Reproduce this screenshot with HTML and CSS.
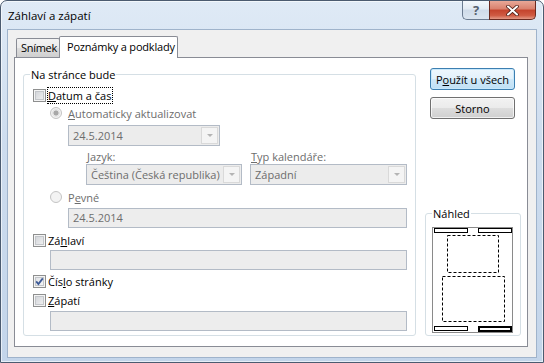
FILE: index.html
```html
<!DOCTYPE html>
<html lang="cs">
<head>
    <meta charset="UTF-8">
    <title>Záhlaví a zápatí</title>
    <link rel="stylesheet" href="styles.css">
</head>
<body>
    <div class="window">
        <div class="titlebar">
            <span class="title">Záhlaví a zápatí</span>
            <div class="caption-buttons">
                <span class="cap-btn help">?</span>
                <span class="cap-btn close">
                    <svg width="13" height="11" viewBox="0 0 13 11">
                        <path d="M2 1.5 L11 9.5 M11 1.5 L2 9.5" stroke="#4a1d15" stroke-width="3.6" stroke-linecap="round"/>
                        <path d="M2 1.5 L11 9.5 M11 1.5 L2 9.5" stroke="#fff" stroke-width="2" stroke-linecap="round"/>
                    </svg>
                </span>
            </div>
        </div>

        <div class="client">
            <div class="tabs">
                <span class="tab">Snímek</span>
                <span class="tab active">Poznámky a podklady</span>
            </div>

            <div class="panel">
                <div class="group main-group">
                    <span class="legend">Na stránce bude</span>

                    <div class="row row-datum">
                        <span class="check"></span>
                        <span class="focus"><u>D</u>atum a čas</span>
                    </div>
                    <div class="row indent-1 disabled">
                        <span class="radio selected"></span>
                        <span><u>A</u>utomaticky aktualizovat</span>
                    </div>
                    <div class="combo date-combo">
                        <span class="combo-text">24.5.2014</span>
                        <span class="combo-btn"><span class="arrow"></span></span>
                    </div>
                    <div class="lang-grid disabled">
                        <span class="field-label"><u>J</u>azyk:</span>
                        <span class="field-label"><u>T</u>yp kalendáře:</span>
                        <div class="combo">
                            <span class="combo-text">Čeština (Česká republika)</span>
                            <span class="combo-btn"><span class="arrow"></span></span>
                        </div>
                        <div class="combo">
                            <span class="combo-text">Západní</span>
                            <span class="combo-btn"><span class="arrow"></span></span>
                        </div>
                    </div>
                    <div class="row indent-1 row-pevne disabled">
                        <span class="radio"></span>
                        <span>P<u>e</u>vné</span>
                    </div>
                    <div class="textbox date-box">24.5.2014</div>

                    <div class="row row-zahlavi">
                        <span class="check"></span>
                        <span>Zá<u>h</u>laví</span>
                    </div>
                    <div class="textbox wide-box box-zahlavi"></div>

                    <div class="row row-cislo">
                        <span class="check checked">
                            <svg width="11" height="11" viewBox="0 0 11 11">
                                <path d="M2.2 5.4 L4.4 8 L8.8 2.4" fill="none" stroke="#3d5a97" stroke-width="1.8"/>
                            </svg>
                        </span>
                        <span>Čís<u>l</u>o stránky</span>
                    </div>
                    <div class="row row-zapati">
                        <span class="check"></span>
                        <span><u>Z</u>ápatí</span>
                    </div>
                    <div class="textbox wide-box box-zapati"></div>
                </div>

                <div class="side">
                    <button class="btn default">P<u>o</u>užít u všech</button>
                    <button class="btn storno">Storno</button>

                    <div class="group preview-group">
                        <span class="legend">Náhled</span>
                        <svg class="preview" width="81" height="106" viewBox="0 0 81 106">
                            <rect x="0.5" y="0.5" width="80" height="105" fill="#fff" stroke="#8a8a8a"/>
                            <rect x="2.5" y="1.5" width="33" height="4" fill="#fff" stroke="#000"/>
                            <rect x="46.5" y="1.5" width="33" height="4" fill="#fff" stroke="#000"/>
                            <rect x="15.5" y="8.5" width="51" height="37" fill="none" stroke="#000" stroke-dasharray="3 2"/>
                            <rect x="10.5" y="49.5" width="62" height="45" fill="none" stroke="#000" stroke-dasharray="3 2"/>
                            <rect x="2.5" y="99.5" width="33" height="4" fill="#fff" stroke="#000"/>
                            <rect x="47" y="100" width="32" height="4" fill="#fff" stroke="#000" stroke-width="2"/>
                        </svg>
                    </div>
                </div>
            </div>
        </div>
    </div>
</body>
</html>
```

FILE: styles.css
```css
body {
    margin: 0;
    font-family: "Open Sans", "Noto Sans", sans-serif;
    font-size: 11px;
    color: #000;
    background: #fff;
}

.window {
    width: 544px;
    height: 363px;
    box-sizing: border-box;
    border: 1px solid #4b5b70;
    border-radius: 7px 7px 0 0;
    background: linear-gradient(#dfeaf6, #cddcee 40%, #c3d5ea);
    box-shadow: inset 0 0 0 1px rgba(255, 255, 255, 0.6);
    padding: 0 6px 4px 6px;
    display: flex;
    flex-direction: column;
}

/* title bar */
.titlebar {
    height: 28px;
    display: flex;
    justify-content: space-between;
    align-items: center;
}

.title {
    margin-left: 1px;
    font-size: 11.5px;
    color: #000;
}

.caption-buttons {
    align-self: flex-start;
    display: flex;
    margin-right: 1px;
}

.cap-btn {
    height: 19px;
    display: flex;
    align-items: center;
    justify-content: center;
    box-sizing: border-box;
    border: 1px solid #6b7b90;
    border-top: none;
}

.help {
    width: 27px;
    border-right: none;
    border-radius: 0 0 0 5px;
    background: linear-gradient(#f4f8fc, #e2eaf3 45%, #cfdbe9 50%, #dbe5f0);
    font-size: 13px;
    font-weight: bold;
    color: #56616f;
}

.close {
    width: 47px;
    border-color: #6a2a20;
    border-radius: 0 0 5px 0;
    background: linear-gradient(#e8a898, #d9806c 45%, #c4432c 50%, #cf5a42 80%, #e49a86);
}

/* client area */
.client {
    flex: 1;
    border: 1px solid #9fb3cb;
    background: #f0f0f0;
    padding: 6px 8px 10px 6px;
    display: flex;
    flex-direction: column;
}

.tabs {
    height: 21px;
    display: flex;
    align-items: flex-end;
    padding-left: 2px;
}

.tab {
    width: 44px;
    height: 19px;
    box-sizing: border-box;
    border: 1px solid #898c95;
    border-bottom: none;
    background: linear-gradient(#f3f3f3, #ebebeb 50%, #dddddd 51%, #cfcfcf);
    padding-left: 4px;
    letter-spacing: -0.3px;
    line-height: 17px;
    white-space: nowrap;
    border-radius: 2px 2px 0 0;
}

.tab.active {
    position: relative;
    z-index: 1;
    width: 119px;
    height: 22px;
    margin-left: -1px;
    margin-bottom: -1px;
    background: #fff;
    padding-left: 7px;
    letter-spacing: -0.2px;
    line-height: 19px;
}

.panel {
    flex: 1;
    border: 1px solid #898c95;
    background: #fff;
    padding: 10px 6px 10px 8px;
    display: flex;
    gap: 9px;
}

/* group boxes */
.group {
    box-sizing: border-box;
    border: 1px solid #d5dfe5;
    border-radius: 3px;
}

.legend {
    display: block;
    width: fit-content;
    height: 15px;
    line-height: 15px;
    margin: -8px 0 0 6px;
    padding: 0 1px;
    background: #fff;
}

.main-group {
    width: 393px;
    height: 262px;
    margin-top: 6px;
    padding: 0 8px 0 9px;
}

.main-group .legend {
    margin-left: -3px;
}

.row {
    display: flex;
    align-items: center;
    height: 18px;
}

.row-datum { margin-top: 4px; }
.row-pevne { margin-top: 3px; }
.row-zahlavi { margin-top: 3px; }
.row-cislo { margin-top: 2px; }
.row-zapati { margin-top: 1px; }

.indent-1 {
    margin-left: 17px;
}

.disabled {
    color: #6d6d6d;
}

.check {
    width: 13px;
    height: 13px;
    box-sizing: border-box;
    border: 1px solid #8e8f8f;
    margin-right: 2px;
    background: linear-gradient(135deg, #cdd0d5, #f4f4f4);
    box-shadow: inset 0 0 0 1px #f4f4f4, inset 0 0 0 2px #c3c6ca;
    display: flex;
    align-items: center;
    justify-content: center;
}

.check.checked {
    background: linear-gradient(135deg, #dde0e4, #f8f8f8);
}

.focus {
    outline: 1px dotted #000;
    padding: 0 1px 0 0;
}

.radio {
    width: 12px;
    height: 12px;
    box-sizing: border-box;
    border: 1px solid #c4c4c4;
    border-radius: 50%;
    margin-right: 6px;
    background: #f3f3f3;
}

.radio.selected {
    background: radial-gradient(circle, #a8a8a8 0, #a8a8a8 2.2px, #e4e4e4 2.8px, #e4e4e4 3.6px, #f3f3f3 4.2px);
}

/* combos and text boxes */
.combo {
    height: 21px;
    box-sizing: border-box;
    border: 1px solid #b3bbc6;
    background: #ececec;
    display: flex;
    color: #6d6d6d;
}

.combo-text {
    flex: 1;
    padding-left: 4px;
    line-height: 19px;
    white-space: nowrap;
    overflow: hidden;
}

.combo-btn {
    width: 17px;
    margin: 1px;
    box-sizing: border-box;
    border: 1px solid #d9d9d9;
    background: #f4f4f4;
    display: flex;
    align-items: center;
    justify-content: center;
}

.arrow {
    width: 0;
    height: 0;
    border-left: 3px solid transparent;
    border-right: 3px solid transparent;
    border-top: 3px solid #b4b4b4;
}

.date-combo {
    width: 152px;
    margin: 3px 0 0 35px;
}

.lang-grid {
    display: grid;
    grid-template-columns: 156px 157px;
    grid-template-rows: 15px 21px;
    column-gap: 8px;
    margin: 3px 0 0 53px;
}

.field-label {
    line-height: 15px;
    padding-left: 1px;
}

.textbox {
    height: 20px;
    box-sizing: border-box;
    border: 1px solid #b3bbc6;
    background: #ededed;
    color: #6d6d6d;
    padding-left: 4px;
    line-height: 18px;
}

.date-box {
    margin: 2px 0 0 35px;
}

.wide-box {
    margin-left: 17px;
}

.box-zahlavi { margin-top: 1px; }
.box-zapati { margin-top: 2px; }

/* right side */
.side {
    width: 96px;
    display: flex;
    flex-direction: column;
}

.btn {
    width: 85px;
    height: 22px;
    margin-left: 5px;
    padding: 0;
    font-family: inherit;
    font-size: 11px;
    color: #000;
    border: 1px solid #707070;
    border-radius: 3px;
    background: linear-gradient(#f2f2f2, #ebebeb 50%, #dddddd 51%, #cfcfcf);
    box-shadow: inset 0 0 0 1px rgba(255, 255, 255, 0.7);
}

.btn.default {
    border-color: #3c7fb1;
    background: linear-gradient(#eef7fd, #e2f1fb 50%, #cfe8f8 51%, #c0e0f5);
    box-shadow: inset 0 0 0 1px #c8e8fb;
}

.btn.storno {
    margin-top: 7px;
}

.preview-group {
    margin-top: auto;
    height: 123px;
}

.preview {
    display: block;
    margin: 6px 0 0 6px;
}
```
